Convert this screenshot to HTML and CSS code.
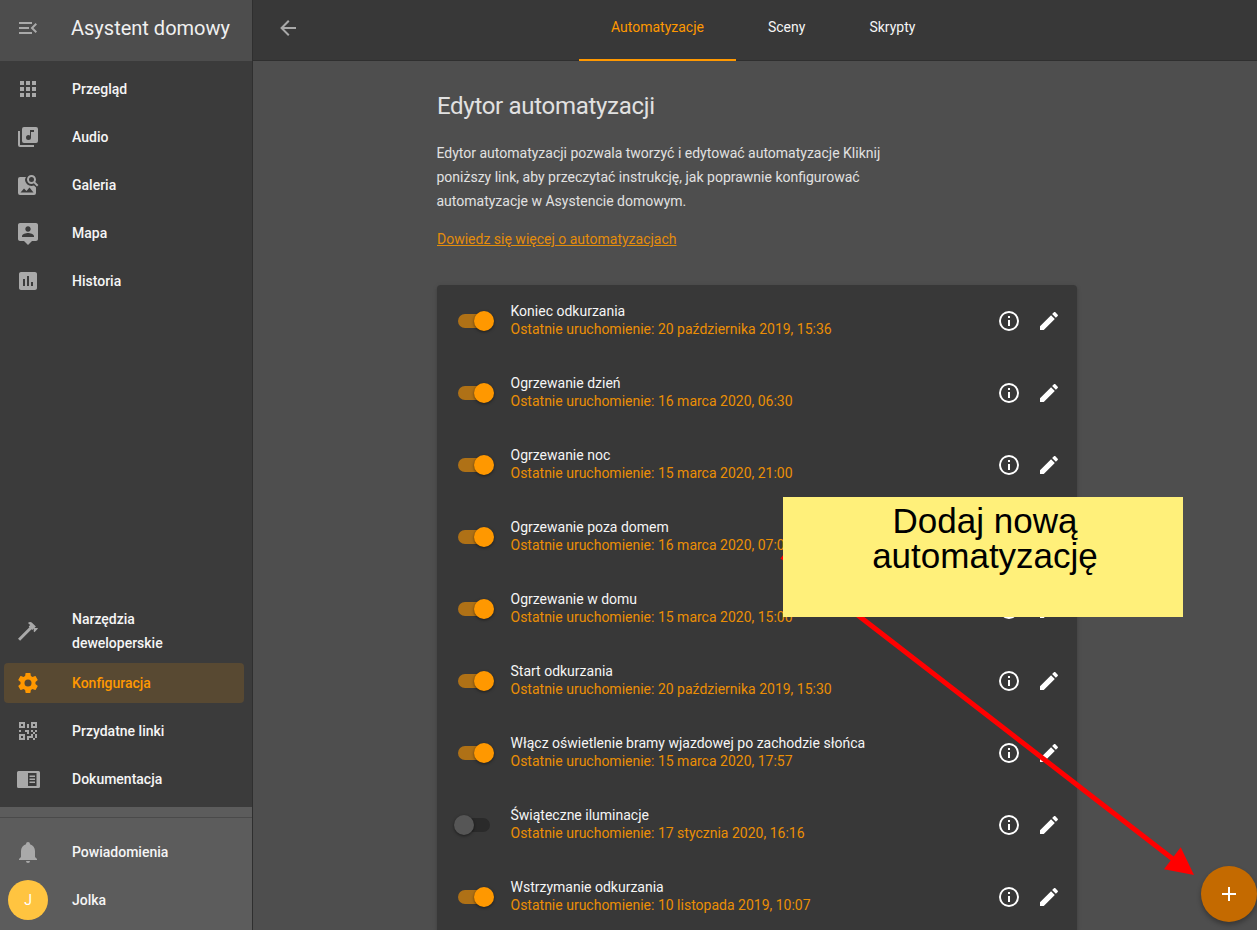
FILE: index.html
```html
<html>
<head>
  <title>Asystent domowy</title>
  <meta name="viewport" content="width=device-width">
  <link rel="stylesheet" href="styles.css">
</head>
<body>

<svg class="defs" width="0" height="0">
  <symbol id="i-menu" viewBox="0 0 24 24"><path d="M21,15.61L19.59,17L14.58,12L19.59,7L21,8.39L17.44,12L21,15.61M3,6H16V8H3V6M3,13V11H13V13H3M3,18V16H16V18H3Z"/></symbol>
  <symbol id="i-apps" viewBox="0 0 24 24"><path d="M16,20H20V16H16M16,14H20V10H16M10,8H14V4H10M16,8H20V4H16M10,14H14V10H10M4,14H8V10H4M4,20H8V16H4M10,20H14V16H10M4,8H8V4H4V8Z"/></symbol>
  <symbol id="i-music" viewBox="0 0 24 24"><path d="M4,6H2V20A2,2 0 0,0 4,22H18V20H4M18,7H15V12.5A2.5,2.5 0 0,1 12.5,15A2.5,2.5 0 0,1 10,12.5A2.5,2.5 0 0,1 12.5,10C13.07,10 13.58,10.19 14,10.5V5H18M20,2H8A2,2 0 0,0 6,4V16A2,2 0 0,0 8,18H20A2,2 0 0,0 22,16V4A2,2 0 0,0 20,2Z"/></symbol>
  <symbol id="i-gallery" viewBox="0 0 24 24"><path fill-rule="evenodd" d="M15.5,2C18,2 20,4 20,6.5C20,7.38 19.75,8.21 19.31,8.9L22.39,12L21,13.39L17.88,10.32C17.19,10.75 16.37,11 15.5,11C13,11 11,9 11,6.5C11,4 13,2 15.5,2M15.5,4A2.5,2.5 0 0,0 13,6.5A2.5,2.5 0 0,0 15.5,9A2.5,2.5 0 0,0 18,6.5A2.5,2.5 0 0,0 15.5,4M4,4H10C9.4,4.9 9,6 9,7A6.5,6.5 0 0,0 15.5,13C16.4,13 17.2,12.8 18,12.5L20,14.5V20A2,2 0 0,1 18,22H4A2,2 0 0,1 2,20V6A2,2 0 0,1 4,4M4.5,19.5H17.5L13.5,14.5L10.5,18L8,15.5Z"/></symbol>
  <symbol id="i-map" viewBox="0 0 24 24"><path d="M20 2H4C2.9 2 2 2.9 2 4V18C2 19.1 2.9 20 4 20H8L12 24L16 20H20C21.1 20 22 19.1 22 18V4C22 2.9 21.1 2 20 2M12 5.3C13.5 5.3 14.7 6.5 14.7 8S13.5 10.7 12 10.7 9.3 9.5 9.3 8 10.5 5.3 12 5.3M18 16H6V15.1C6 13.1 10 12 12 12S18 13.1 18 15.1V16Z"/></symbol>
  <symbol id="i-history" viewBox="0 0 24 24"><path d="M9 17H7V10H9V17M13 17H11V7H13V17M17 17H15V13H17V17M19 3H5C3.9 3 3 3.9 3 5V19C3 20.1 3.9 21 5 21H19C20.1 21 21 20.1 21 19V5C21 3.9 20.1 3 19 3Z"/></symbol>
  <symbol id="i-hammer" viewBox="0 0 24 24"><path d="M2 19.63L13.43 8.2L12.72 7.5L14.14 6.07L12 3.89C13.2 2.7 15.09 2.7 16.27 3.89L19.87 7.5L18.45 8.91H21.29L22 9.62L18.45 13.21L17.74 12.5V9.62L16.27 11.04L15.56 10.33L4.13 21.76L2 19.63Z"/></symbol>
  <symbol id="i-cog" viewBox="0 0 24 24"><path d="M12,15.5A3.5,3.5 0 0,1 8.5,12A3.5,3.5 0 0,1 12,8.5A3.5,3.5 0 0,1 15.5,12A3.5,3.5 0 0,1 12,15.5M19.43,12.97C19.47,12.65 19.5,12.33 19.5,12C19.5,11.67 19.47,11.34 19.43,11L21.54,9.37C21.73,9.22 21.78,8.95 21.66,8.73L19.66,5.27C19.54,5.05 19.27,4.96 19.05,5.05L16.56,6.05C16.04,5.66 15.5,5.32 14.87,5.07L14.5,2.42C14.46,2.18 14.25,2 14,2H10C9.75,2 9.54,2.18 9.5,2.42L9.13,5.07C8.5,5.32 7.96,5.66 7.44,6.05L4.95,5.05C4.73,4.96 4.46,5.05 4.34,5.27L2.34,8.73C2.21,8.95 2.27,9.22 2.46,9.37L4.57,11C4.53,11.34 4.5,11.67 4.5,12C4.5,12.33 4.53,12.65 4.57,12.97L2.46,14.63C2.27,14.78 2.21,15.05 2.34,15.27L4.34,18.73C4.46,18.95 4.73,19.03 4.95,18.95L7.44,17.94C7.96,18.34 8.5,18.68 9.13,18.93L9.5,21.58C9.54,21.82 9.75,22 10,22H14C14.25,22 14.46,21.82 14.5,21.58L14.87,18.93C15.5,18.67 16.04,18.34 16.56,17.94L19.05,18.95C19.27,19.03 19.54,18.95 19.66,18.73L21.66,15.27C21.78,15.05 21.73,14.78 21.54,14.63L19.43,12.97Z"/></symbol>
  <symbol id="i-qr" viewBox="0 0 24 24"><path d="M3,11H5V13H3V11M11,5H13V9H11V5M9,11H13V15H11V13H9V11M15,11H17V13H19V11H21V13H19V15H21V19H19V21H17V19H13V21H11V17H15V15H17V13H15V11M19,19V15H17V19H19M15,3H21V9H15V3M17,5V7H19V5H17M3,3H9V9H3V3M5,5V7H7V5H5M3,15H9V21H3V15M5,17V19H7V17H5Z"/></symbol>
  <symbol id="i-docs" viewBox="0 0 24 24"><path fill-rule="evenodd" d="M2.5,4H22.5A1.5,1.5 0 0,1 24,5.5V19.5A1.5,1.5 0 0,1 22.5,21H2.5A1.5,1.5 0 0,1 1,19.5V5.5A1.5,1.5 0 0,1 2.5,4M12,6V19H20.5V6H12M13.5,8.5H19V10H13.5V8.5M13.5,11.5H19V13H13.5V11.5M13.5,14.5H19V16H13.5V14.5Z"/></symbol>
  <symbol id="i-bell" viewBox="0 0 24 24"><path d="M21,19V20H3V19L5,17V11C5,7.9 7.03,5.17 10,4.29C10,4.19 10,4.1 10,4A2,2 0 0,1 12,2A2,2 0 0,1 14,4C14,4.1 14,4.19 14,4.29C16.97,5.17 19,7.9 19,11V17L21,19M14,21A2,2 0 0,1 12,23A2,2 0 0,1 10,21"/></symbol>
  <symbol id="i-info" viewBox="0 0 24 24"><path d="M11,9H13V7H11M12,20C7.59,20 4,16.41 4,12C4,7.59 7.59,4 12,4C16.41,4 20,7.59 20,12C20,16.41 16.41,20 12,20M12,2A10,10 0 0,0 2,12A10,10 0 0,0 12,22A10,10 0 0,0 22,12A10,10 0 0,0 12,2M11,17H13V11H11V17Z"/></symbol>
  <symbol id="i-pencil" viewBox="0 0 24 24"><path d="M20.71,7.04C21.1,6.65 21.1,6 20.71,5.63L18.37,3.29C18,2.9 17.35,2.9 16.96,3.29L15.12,5.12L18.87,8.87M3,17.25V21H6.75L17.81,9.93L14.06,6.18L3,17.25Z"/></symbol>
  <symbol id="i-back" viewBox="0 0 24 24"><path d="M20,11V13H8L13.5,18.5L12.08,19.92L4.16,12L12.08,4.08L13.5,5.5L8,11H20Z"/></symbol>
  <symbol id="i-plus" viewBox="0 0 24 24"><path d="M19,13H13V19H11V13H5V11H11V5H13V11H19V13Z"/></symbol>
</svg>

<div class="app">
  <aside class="sidebar">
    <div class="sidebar-head">
      <svg class="icon"><use href="#i-menu"/></svg>
      <span class="sidebar-title">Asystent domowy</span>
    </div>
    <nav class="nav">
      <a class="nav-item"><svg class="icon"><use href="#i-apps"/></svg><span>Przegląd</span></a>
      <a class="nav-item"><svg class="icon"><use href="#i-music"/></svg><span>Audio</span></a>
      <a class="nav-item"><svg class="icon"><use href="#i-gallery"/></svg><span>Galeria</span></a>
      <a class="nav-item"><svg class="icon"><use href="#i-map"/></svg><span>Mapa</span></a>
      <a class="nav-item"><svg class="icon"><use href="#i-history"/></svg><span>Historia</span></a>
      <div class="nav-spacer"></div>
      <a class="nav-item tall"><svg class="icon"><use href="#i-hammer"/></svg><span>Narzędzia deweloperskie</span></a>
      <a class="nav-item active"><svg class="icon"><use href="#i-cog"/></svg><span>Konfiguracja</span></a>
      <a class="nav-item"><svg class="icon"><use href="#i-qr"/></svg><span>Przydatne linki</span></a>
      <a class="nav-item"><svg class="icon"><use href="#i-docs"/></svg><span>Dokumentacja</span></a>
    </nav>
    <div class="sidebar-foot">
      <div class="foot-line"></div>
      <a class="nav-item"><svg class="icon"><use href="#i-bell"/></svg><span>Powiadomienia</span></a>
      <a class="nav-item user"><span class="avatar">J</span><span>Jolka</span></a>
    </div>
  </aside>

  <main class="main">
    <header class="topbar">
      <svg class="icon back"><use href="#i-back"/></svg>
      <div class="tabs">
        <a class="tab active">Automatyzacje</a>
        <a class="tab">Sceny</a>
        <a class="tab">Skrypty</a>
      </div>
    </header>

    <div class="content">
      <h1>Edytor automatyzacji</h1>
      <p class="intro">Edytor automatyzacji pozwala tworzyć i edytować automatyzacje Kliknij poniższy link, aby przeczytać instrukcję, jak poprawnie konfigurować automatyzacje w Asystencie domowym.</p>
      <p class="more"><a>Dowiedz się więcej o automatyzacjach</a></p>

      <section class="card">
        <div class="row">
          <span class="switch on"></span>
          <div class="row-text"><div>Koniec odkurzania</div><div class="last">Ostatnie uruchomienie: 20 października 2019, 15:36</div></div>
          <svg class="icon act"><use href="#i-info"/></svg><svg class="icon act"><use href="#i-pencil"/></svg>
        </div>
        <div class="row">
          <span class="switch on"></span>
          <div class="row-text"><div>Ogrzewanie dzień</div><div class="last">Ostatnie uruchomienie: 16 marca 2020, 06:30</div></div>
          <svg class="icon act"><use href="#i-info"/></svg><svg class="icon act"><use href="#i-pencil"/></svg>
        </div>
        <div class="row">
          <span class="switch on"></span>
          <div class="row-text"><div>Ogrzewanie noc</div><div class="last">Ostatnie uruchomienie: 15 marca 2020, 21:00</div></div>
          <svg class="icon act"><use href="#i-info"/></svg><svg class="icon act"><use href="#i-pencil"/></svg>
        </div>
        <div class="row">
          <span class="switch on"></span>
          <div class="row-text"><div>Ogrzewanie poza domem</div><div class="last">Ostatnie uruchomienie: 16 marca 2020, 07:00</div></div>
          <svg class="icon act"><use href="#i-info"/></svg><svg class="icon act"><use href="#i-pencil"/></svg>
        </div>
        <div class="row">
          <span class="switch on"></span>
          <div class="row-text"><div>Ogrzewanie w domu</div><div class="last">Ostatnie uruchomienie: 15 marca 2020, 15:00</div></div>
          <svg class="icon act"><use href="#i-info"/></svg><svg class="icon act"><use href="#i-pencil"/></svg>
        </div>
        <div class="row">
          <span class="switch on"></span>
          <div class="row-text"><div>Start odkurzania</div><div class="last">Ostatnie uruchomienie: 20 października 2019, 15:30</div></div>
          <svg class="icon act"><use href="#i-info"/></svg><svg class="icon act"><use href="#i-pencil"/></svg>
        </div>
        <div class="row">
          <span class="switch on"></span>
          <div class="row-text"><div>Włącz oświetlenie bramy wjazdowej po zachodzie słońca</div><div class="last">Ostatnie uruchomienie: 15 marca 2020, 17:57</div></div>
          <svg class="icon act"><use href="#i-info"/></svg><svg class="icon act"><use href="#i-pencil"/></svg>
        </div>
        <div class="row">
          <span class="switch"></span>
          <div class="row-text"><div>Świąteczne iluminacje</div><div class="last">Ostatnie uruchomienie: 17 stycznia 2020, 16:16</div></div>
          <svg class="icon act"><use href="#i-info"/></svg><svg class="icon act"><use href="#i-pencil"/></svg>
        </div>
        <div class="row">
          <span class="switch on"></span>
          <div class="row-text"><div>Wstrzymanie odkurzania</div><div class="last">Ostatnie uruchomienie: 10 listopada 2019, 10:07</div></div>
          <svg class="icon act"><use href="#i-info"/></svg><svg class="icon act"><use href="#i-pencil"/></svg>
        </div>
      </section>
    </div>
  </main>
</div>

<button class="fab"><svg class="icon"><use href="#i-plus"/></svg></button>

<svg class="arrow" width="1257" height="930" viewBox="0 0 1257 930">
  <line x1="782" y1="556.5" x2="1178" y2="863" stroke="#ff0000" stroke-width="5"/>
  <polygon points="1194,875 1180.7,847.3 1164,869.3" fill="#ff0000"/>
</svg>

<div class="note">Dodaj nową<br>automatyzację</div>

</body>
</html>
```

FILE: styles.css
```css
* { box-sizing: border-box; }
html, body { padding: 0; margin: 0; height: 100%; overflow: hidden; }
body { font-family: Roboto, "Noto Sans", sans-serif; font-size: 14px; color: #e1e1e1; background-color: #4e4e4e; }

.defs { position: absolute; }
.icon { display: block; flex: none; width: 24px; height: 24px; fill: currentColor; }

.app { display: flex; height: 100vh; }

/* sidebar */
.sidebar { display: flex; flex-direction: column; flex: none; width: 253px; background-color: #3b3b3b; border-right: 1px solid #2f2f2f; }
.sidebar-head { display: flex; align-items: center; flex: none; height: 61px; padding: 0 0 5px 16px; color: #a9a9a9; background-color: #4d4d4d; }
.sidebar-title { margin-left: 31px; font-size: 20px; color: #f0f0f0; }

.nav { display: flex; flex-direction: column; flex: 1; padding: 4px 0; }
.nav-spacer { flex: 1; }
.nav-item { display: flex; align-items: center; flex: none; width: 240px; height: 40px; margin: 4px 0 4px 4px; padding-left: 12px; border-radius: 4px; font-weight: 500; line-height: 24px; color: #f5f5f5; }
.nav-item .icon { margin-right: 32px; color: #a9a9a9; }
.nav-item.tall { height: 56px; margin-bottom: 0; padding-right: 40px; }
.nav-item.active { background-color: rgba(255, 152, 0, 0.15); color: #ff9800; }
.nav-item.active .icon { color: #ff9800; }

.sidebar-foot { display: flex; flex-direction: column; flex: none; height: 123px; padding-top: 10px; background-color: #5c5c5c; }
.foot-line { flex: none; height: 1px; background-color: #4a4a4a; margin-bottom: 10px; }
.nav-item.user { padding-left: 4px; }
.avatar { display: flex; align-items: center; justify-content: center; flex: none; width: 40px; height: 40px; margin-right: 24px; border-radius: 50%; font-weight: 400; color: #fff; background-color: #ffc440; }

/* main */
.main { flex: 1; min-width: 0; display: flex; flex-direction: column; }
.topbar { display: flex; align-items: flex-start; flex: none; height: 61px; background-color: #383838; border-bottom: 1px solid #2f2f2f; }
.back { margin: 16px 0 0 23px; color: #a9a9a9; }
.tabs { display: flex; margin-left: 279px; }
.tab { height: 61px; padding: 18px 32px 0; color: #f5f5f5; line-height: 18px; }
.tab.active { color: #ff9800; border-bottom: 2px solid #ff9800; }

.content { flex: 1; width: 640px; margin-left: 184px; }
h1 { margin: 29px 0 0; font-size: 24px; font-weight: 400; line-height: 32px; letter-spacing: -0.3px; color: #e1e1e1; }
.intro { width: 460px; margin: 19px 0 0 -0.5px; line-height: 24px; }
.more { margin: 14px 0 0; line-height: 24px; }
.more a { color: #ff9800; text-decoration: underline; opacity: 0.85; }

.card { margin-top: 34px; border-radius: 4px; background-color: #383838; box-shadow: 0 2px 2px rgba(0, 0, 0, 0.14), 0 1px 5px rgba(0, 0, 0, 0.12); }
.row { display: flex; align-items: center; height: 72px; padding: 0 16px 0 21px; }
.row-text { flex: 1; min-width: 0; margin-left: 16.5px; padding-bottom: 2px; line-height: 18px; color: #f5f5f5; }
.last { color: #ff9800; opacity: 0.9; }
.act { margin-left: 16px; color: #fff; }

.switch { display: block; position: relative; flex: none; width: 36px; height: 14px; }
.switch::before { content: ""; position: absolute; left: 0; top: 0; width: 32px; height: 14px; border-radius: 7px; background-color: #2a2a2a; }
.switch::after { content: ""; position: absolute; left: -4px; top: -3px; width: 20px; height: 20px; border-radius: 50%; background-color: #565656; box-shadow: 0 1px 3px rgba(0, 0, 0, 0.5); }
.switch.on::before { background-color: rgba(255, 152, 0, 0.6); }
.switch.on::after { left: 16px; background-color: #ff9800; }

/* overlays */
.fab { display: flex; align-items: center; justify-content: center; position: absolute; left: 1201px; top: 866px; width: 56px; height: 56px; padding: 0; border: none; border-radius: 50%; color: #fff; background-color: #c46a00; box-shadow: 0 3px 5px rgba(0, 0, 0, 0.3); }
.arrow { position: absolute; left: 0; top: 0; }
.note { position: absolute; left: 783px; top: 497px; width: 400px; height: 120px; padding: 6px 0 0 4px; font-family: "Liberation Sans", Arial, sans-serif; font-size: 35px; line-height: 35px; text-align: center; color: #000; background-color: #fff07a; }
```
